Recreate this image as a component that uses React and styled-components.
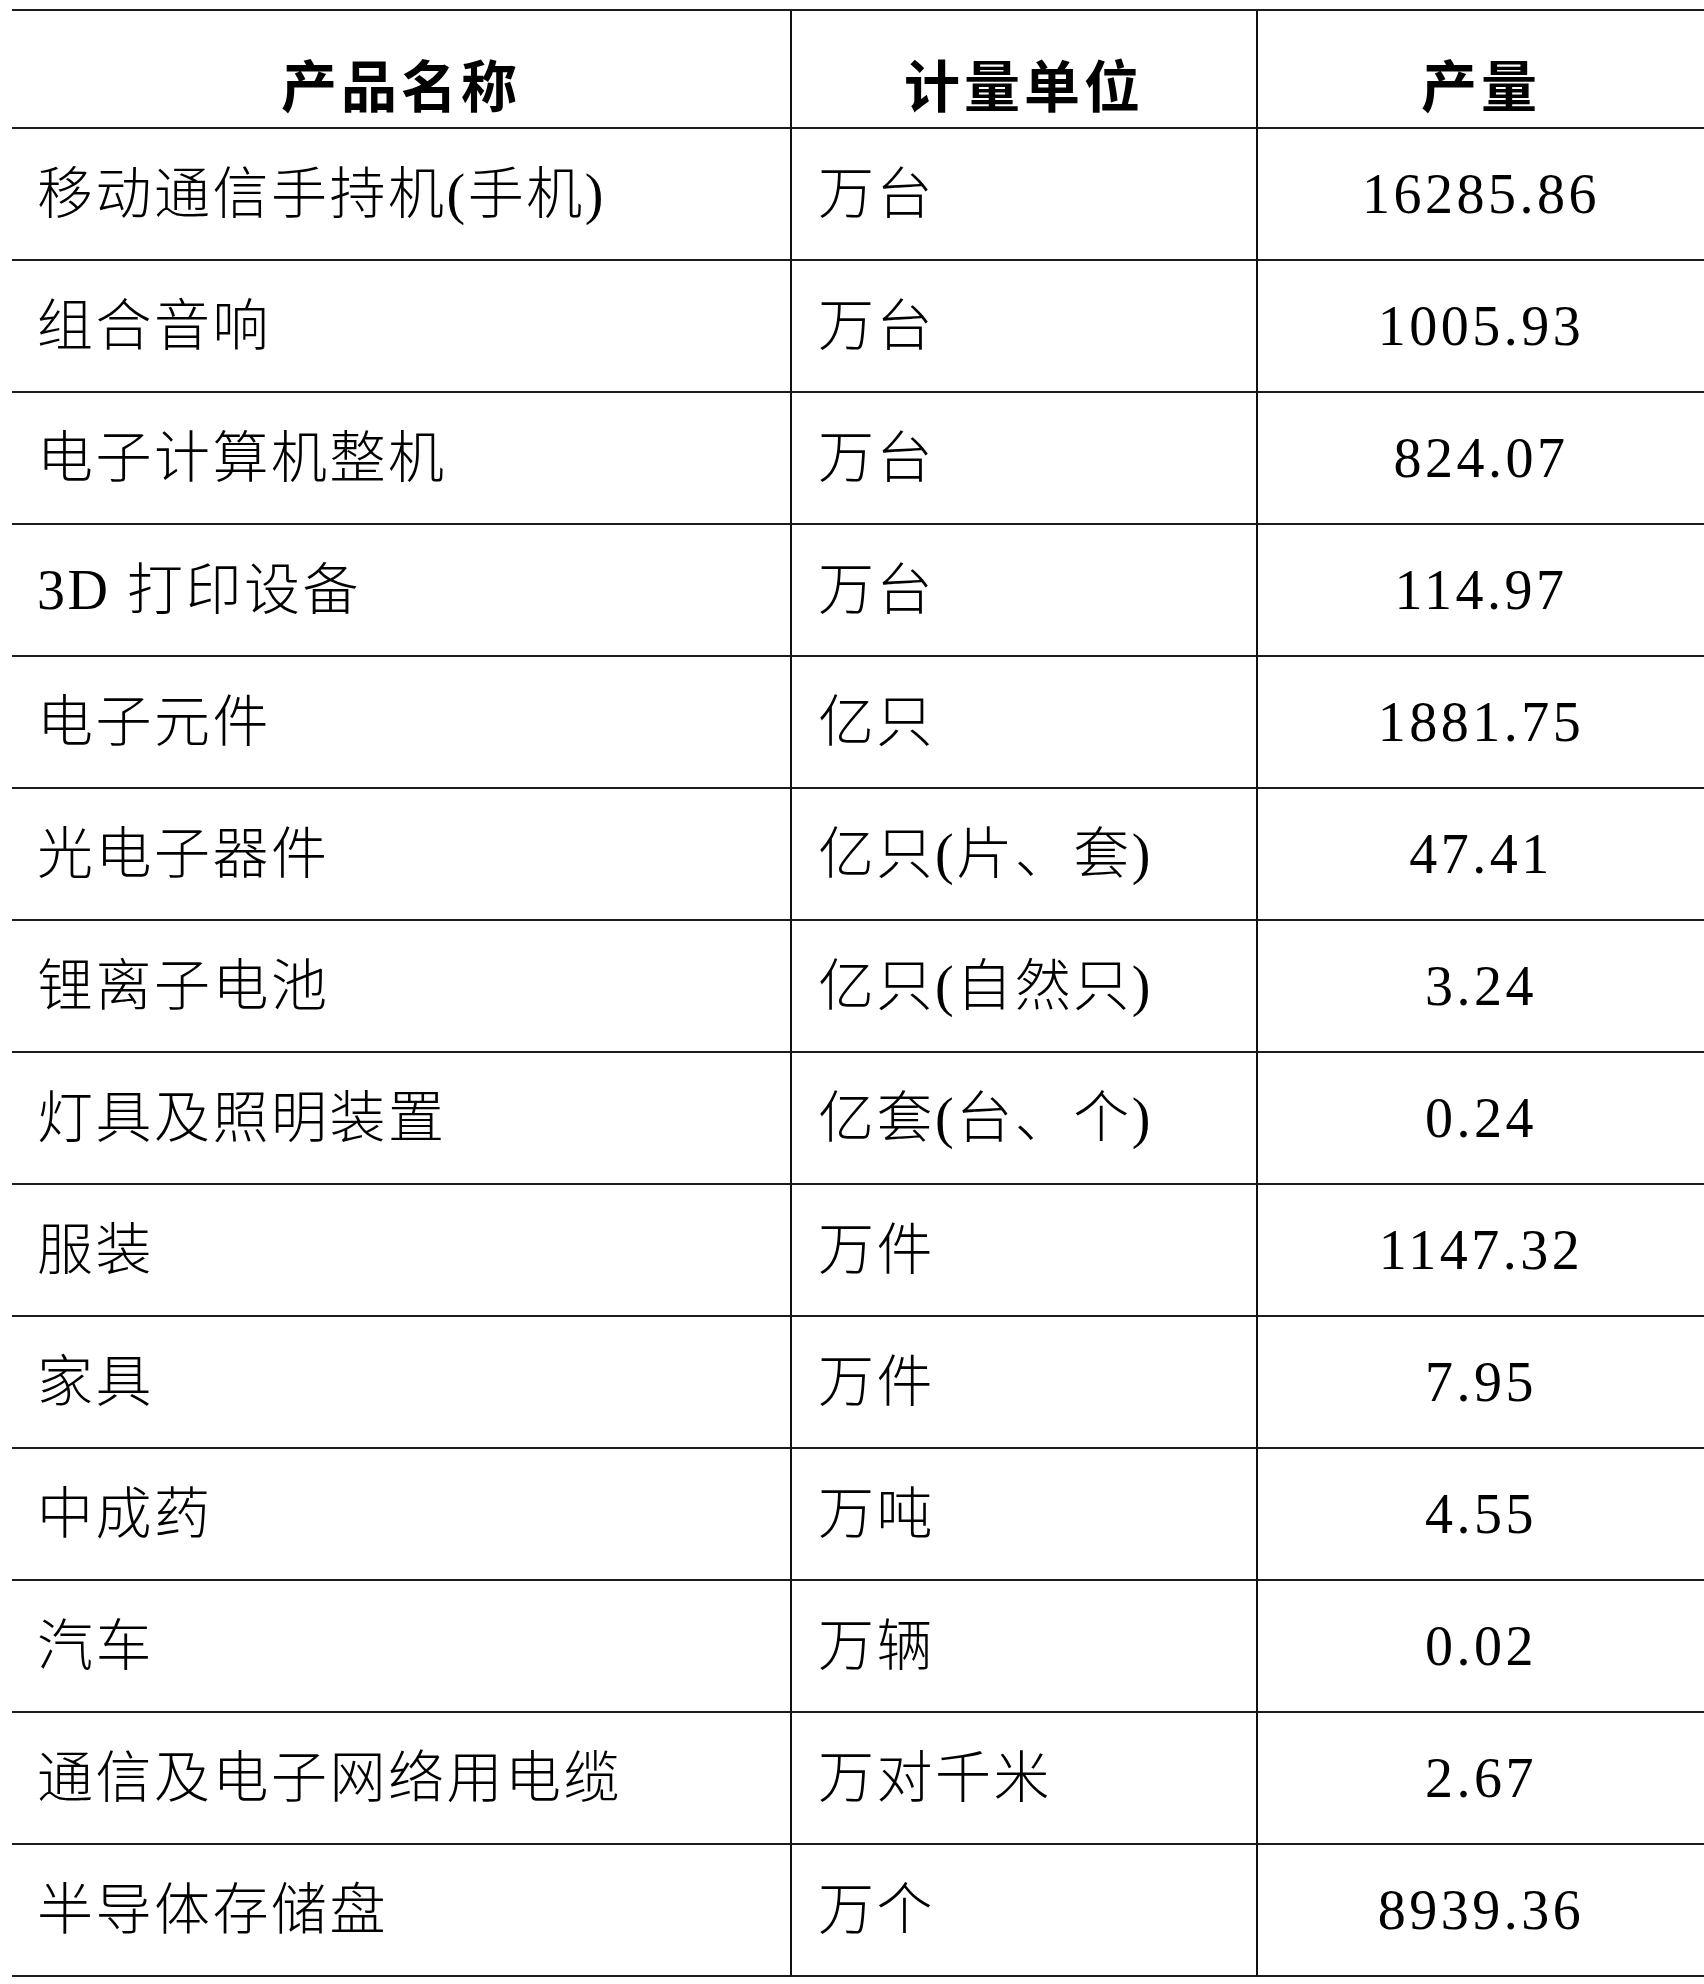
import React from 'react';
import styled, { createGlobalStyle } from 'styled-components';

const GlobalStyle = createGlobalStyle`
  html, body {
    margin: 0;
    padding: 0;
    background: #ffffff;
  }
  body {
    font-family: "Liberation Serif", "Noto Sans CJK SC", serif;
    color: #000;
  }
`;

const Page = styled.div`
  width: 1704px;
  min-height: 1984px;
  padding: 9px 0 0 12px;
  box-sizing: border-box;
  overflow: hidden;
`;

const Table = styled.div`
  display: grid;
  grid-template-columns: 778px 466px 448px;
  grid-template-rows: 118px repeat(14, 132px);
  border-top: 2px solid #1c1c1c;
  width: 1692px;
`;

const Cell = styled.div`
  display: flex;
  align-items: center;
  justify-content: ${p => (p.$align === 'center' ? 'center' : 'flex-start')};
  padding-left: ${p => (p.$align === 'center' ? '0' : p.$indent || '25px')};
  border-bottom: 2px solid #1c1c1c;
  border-left: ${p => (p.$first ? 'none' : '2px solid #111')};
  box-sizing: border-box;
  font-size: 56px;
  font-weight: 300;
  line-height: 1;
  letter-spacing: 2.5px;
  white-space: nowrap;
`;

const HeadCell = styled(Cell)`
  justify-content: center;
  padding-left: 0;
  padding-top: 28px;
  font-family: "Noto Sans CJK SC", sans-serif;
  font-weight: 700;
  letter-spacing: 4px;
`;

const Num = styled.span`
  font-family: "Liberation Serif", serif;
  font-weight: 400;
  font-size: 56px;
  letter-spacing: 3.5px;
`;

const rows = [
  ['移动通信手持机(手机)', '万台', '16285.86'],
  ['组合音响', '万台', '1005.93'],
  ['电子计算机整机', '万台', '824.07'],
  ['3D 打印设备', '万台', '114.97'],
  ['电子元件', '亿只', '1881.75'],
  ['光电子器件', '亿只(片、套)', '47.41'],
  ['锂离子电池', '亿只(自然只)', '3.24'],
  ['灯具及照明装置', '亿套(台、个)', '0.24'],
  ['服装', '万件', '1147.32'],
  ['家具', '万件', '7.95'],
  ['中成药', '万吨', '4.55'],
  ['汽车', '万辆', '0.02'],
  ['通信及电子网络用电缆', '万对千米', '2.67'],
  ['半导体存储盘', '万个', '8939.36'],
];

const App = () => {
  return (
    <Page>
      <GlobalStyle />
      <Table>
        <HeadCell $first>产品名称</HeadCell>
        <HeadCell>计量单位</HeadCell>
        <HeadCell>产量</HeadCell>
        {rows.map(([name, unit, value]) => (
          <React.Fragment key={name}>
            <Cell $first>{name}</Cell>
            <Cell $indent="26px">{unit}</Cell>
            <Cell $align="center">
              <Num>{value}</Num>
            </Cell>
          </React.Fragment>
        ))}
      </Table>
    </Page>
  );
};

export default App;
